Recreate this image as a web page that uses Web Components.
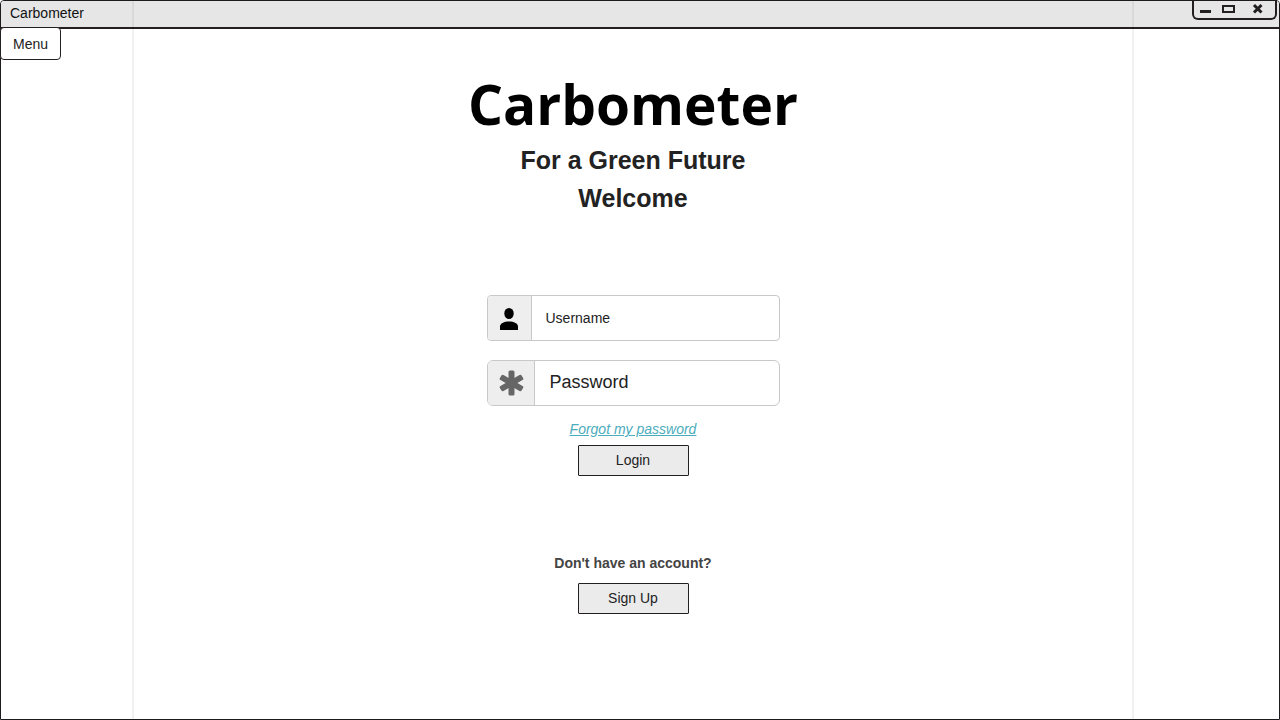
<!DOCTYPE html>
<html lang="en">
<head>
<meta charset="utf-8">
<meta name="viewport" content="width=device-width, initial-scale=1">
<title>Carbometer</title>
<style>
  body { margin: 0; font: 14px/18px "Liberation Sans", Arial, sans-serif; color: #222; background: #fff; }
</style>
</head>
<body>
<app-window heading="Carbometer">
  <plain-button slot="menu" variant="menu">Menu</plain-button>
  <login-page></login-page>
</app-window>

<template id="app-window">
  <style>
    :host { display: flex; flex-direction: column; box-sizing: border-box; min-height: 100vh; position: relative;
      border: 1px solid #1d1b1f; border-radius: 4px 4px 0 0; --columns: 131fr 1002fr 145fr; }
    header { display: flex; justify-content: space-between; align-items: flex-start; box-sizing: border-box;
      height: 28px; background: #e6e6e6; border-bottom: 2px solid #231f20; border-radius: 3px 3px 0 0; }
    .name { padding: 3px 9px; color: #111; }
    .body { flex: 1; display: grid; grid-template-columns: var(--columns); }
    nav { margin: -2px 0 0 -1px; }
    .guides { position: absolute; inset: 0; display: grid; grid-template-columns: var(--columns); pointer-events: none; }
    .guides div { grid-column: 2; border: solid rgba(0, 0, 0, .055); border-width: 0 2px; }
  </style>
  <header><span class="name"></span><window-controls></window-controls></header>
  <div class="body"><nav><slot name="menu"></slot></nav><slot></slot></div>
  <div class="guides"><div></div></div>
</template>

<template id="window-controls">
  <style>
    :host { display: grid; grid-template-columns: 23px 29px 16px; box-sizing: border-box; width: 85px; height: 20px;
      margin: -1px 2px 0 0; padding: 2px 0 0 4px; border: 2px solid #231f20; border-top: 0; border-radius: 0 0 6px 6px; }
    button { display: block; border: 0; padding: 0; background: none; color: #231f20; width: 16px; height: 14px; }
    svg { display: block; }
  </style>
  <button aria-label="Minimize"><svg width="16" height="14" viewBox="0 0 16 14"><path d="M2 8h11v3H2z" fill="currentColor"/></svg></button>
  <button aria-label="Maximize"><svg width="16" height="14" viewBox="0 0 16 14"><path d="M2 4h11v6H2z" fill="none" stroke="currentColor" stroke-width="2"/></svg></button>
  <button aria-label="Close"><svg width="16" height="14" viewBox="0 0 16 14"><path d="M4 3l7.500 7.500m0-7.500l-7.500 7.500" fill="none" stroke="currentColor" stroke-width="3"/></svg></button>
</template>

<template id="plain-button">
  <style>
    :host { display: block; width: 111px; }
    :host([variant="menu"]) { width: 61px; }
    button { display: block; box-sizing: border-box; width: 100%; height: 31px; padding: 0 0 2px; border: 1px solid #231f20;
      border-radius: 1px; background: #ebebeb; font: inherit; color: #222; }
    :host([variant="menu"]) button { height: 33px; padding: 0; border-radius: 4px; background: #fff; }
  </style>
  <button type="button"><slot></slot></button>
</template>

<template id="icon-field">
  <style>
    :host { display: flex; box-sizing: border-box; height: 46px; border: 1px solid #c8c8c8; border-radius: 4px; overflow: hidden; background: #fff; }
    :host([large]) { border-radius: 6px; }
    label { display: flex; align-items: center; justify-content: center; width: 43px; background: #eee; border-right: 1px solid #c8c8c8; }
    :host([large]) label { width: 46px; }
    input { flex: 1; min-width: 0; border: 0; padding: 0 14px; background: none; font: inherit; color: #222; outline: 0; }
    :host([large]) input { font-size: 18px; padding: 0 15px 2px; }
    input::placeholder { color: #222; opacity: 1; }
  </style>
  <label for="field"><slot></slot></label><input id="field">
</template>

<template id="login-page">
  <style>
    :host { display: flex; flex-direction: column; align-items: center; padding: 48px 16px; }
    h1, h2, p { margin: 0; }
    h1 { margin-bottom: 10px; font: 700 55px/54px "Open Sans", "Noto Sans", sans-serif; color: #000; }
    h2 { font-size: 25px; line-height: 38px; }
    form { display: flex; flex-direction: column; align-items: center; width: 100%; max-width: 293px; margin-top: 78px; }
    icon-field { width: 100%; }
    icon-field + icon-field { margin-top: 19px; }
    a { margin: 14px 0 7px; color: #4bacbc; font-style: italic; }
    svg { display: block; }
    p { margin: 78px 0 11px; font-weight: 700; color: #444; }
  </style>
  <h1>Carbometer</h1>
  <h2>For a Green Future</h2>
  <h2>Welcome</h2>
  <form>
    <icon-field name="Username" type="text">
      <svg width="20" height="24" viewBox="0 0 20 24" fill="#000"><ellipse cx="10" cy="7.500" rx="4.700" ry="5.500"/><path d="M1 24v-3.500C1 17.500 5 15.500 10 15.500s9 2 9 5V24z"/></svg>
    </icon-field>
    <icon-field name="Password" type="password" large>
      <svg width="26" height="28" viewBox="0 0 26 28" fill="#666" stroke="#666" stroke-width="3" stroke-linejoin="round"><path id="arm" d="M12 3h3v22h-3z"/><path d="M12 3h3v22h-3z" transform="rotate(60 13.500 14)"/><path d="M12 3h3v22h-3z" transform="rotate(120 13.500 14)"/></svg>
    </icon-field>
    <a href="#forgot">Forgot my password</a>
    <plain-button>Login</plain-button>
  </form>
  <p>Don't have an account?</p>
  <plain-button>Sign Up</plain-button>
</template>

<script>
  class TemplateElement extends HTMLElement {
    constructor() {
      super();
      const template = document.getElementById(this.localName);
      this.attachShadow({ mode: "open" }).append(template.content.cloneNode(true));
    }
  }
  customElements.define("window-controls", class extends TemplateElement {});
  customElements.define("plain-button", class extends TemplateElement {});
  customElements.define("icon-field", class extends TemplateElement {
    connectedCallback() {
      const input = this.shadowRoot.querySelector("input");
      input.type = this.getAttribute("type");
      input.placeholder = this.getAttribute("name");
      this.shadowRoot.querySelector("label").setAttribute("aria-label", input.placeholder);
    }
  });
  customElements.define("login-page", class extends TemplateElement {});
  customElements.define("app-window", class extends TemplateElement {
    connectedCallback() {
      this.shadowRoot.querySelector(".name").textContent = this.getAttribute("heading");
    }
  });
</script>
</body>
</html>
